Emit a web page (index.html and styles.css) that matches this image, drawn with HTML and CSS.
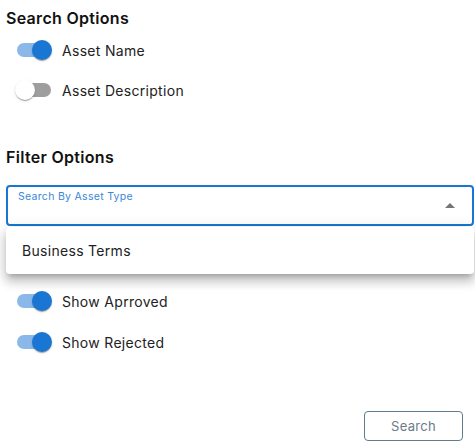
FILE: index.html
```html
<!DOCTYPE html>
<html lang="en">
<head>
    <meta charset="UTF-8">
    <meta name="viewport" content="width=device-width, initial-scale=1.0">
    <title>Search Options</title>
    <link rel="stylesheet" href="styles.css">
</head>
<body>

<div class="panel">
    <h2 class="section-title">Search Options</h2>

    <label class="switch-row">
        <span class="switch on"><span class="track"></span><span class="thumb"></span></span>
        <span class="switch-label">Asset Name</span>
    </label>
    <label class="switch-row">
        <span class="switch"><span class="track"></span><span class="thumb"></span></span>
        <span class="switch-label">Asset Description</span>
    </label>

    <h2 class="section-title filter-title">Filter Options</h2>

    <div class="select-wrap">
        <div class="select-box">
            <span class="select-label">Search By Asset Type</span>
            <span class="arrow"></span>
        </div>
        <!-- menu abierto sobre el contenido -->
        <ul class="menu">
            <li class="menu-item">Business Terms</li>
        </ul>
    </div>

    <div class="filter-switches">
        <label class="switch-row">
            <span class="switch on"><span class="track"></span><span class="thumb"></span></span>
            <span class="switch-label">Show Aprroved</span>
        </label>
        <label class="switch-row">
            <span class="switch on"><span class="track"></span><span class="thumb"></span></span>
            <span class="switch-label">Show Rejected</span>
        </label>
    </div>

    <div class="actions">
        <button class="btn-search">Search</button>
    </div>
</div>

</body>
</html>
```

FILE: styles.css
```css
body {
    font-family: Inter, "Open Sans", sans-serif;
    letter-spacing: 0.3px;
    background-color: #fff;
    color: #1f1f1f;
    margin: 0;
}
.panel {
    padding: 6px 1px 0 6px;
}
.section-title {
    margin: 0;
    font-size: 16px;
    line-height: 24px;
    font-weight: 600;
    color: #111;
}
.filter-title {
    margin-top: 35px;
}
.switch-row {
    display: flex;
    align-items: center;
    gap: 10px;
    height: 40px;
    padding-left: 9px;
}
.switch {
    position: relative;
    width: 37px;
    height: 20px;
}
.track {
    position: absolute;
    left: 2px;
    top: 3px;
    width: 34px;
    height: 14px;
    border-radius: 7px;
    background-color: #9e9e9e;
}
.thumb {
    position: absolute;
    left: 0;
    top: 0;
    width: 20px;
    height: 20px;
    border-radius: 50%;
    background-color: #fff;
    box-shadow: 0 2px 1px -1px rgba(0,0,0,0.2), 0 1px 1px 0 rgba(0,0,0,0.14), 0 1px 3px 0 rgba(0,0,0,0.12);
}
.switch.on .track {
    background-color: #8ab8e9;
}
.switch.on .thumb {
    left: 17px;
    background-color: #1976d2;
}
.switch-label {
    font-size: 14px;
    color: #222;
}
.select-wrap {
    position: relative;
    margin-top: 16px;
}
.select-box {
    position: relative;
    height: 41px;
    border: 2px solid #1976d2;
    border-radius: 4px;
    box-sizing: border-box;
}
.select-label {
    position: absolute;
    left: 10px;
    top: 3px;
    font-size: 10.5px;
    color: #3a87d8;
}
.arrow {
    position: absolute;
    right: 17px;
    top: 16px;
    width: 0;
    height: 0;
    border-left: 5px solid transparent;
    border-right: 5px solid transparent;
    border-bottom: 5px solid #757575;
}
.menu {
    position: absolute;
    left: 0;
    right: 0;
    top: 42px;
    margin: 0;
    padding: 9px 0 8px;
    list-style: none;
    background-color: #fff;
    border-radius: 4px;
    box-shadow: 0 5px 5px -3px rgba(0,0,0,0.2), 0 8px 10px 1px rgba(0,0,0,0.14), 0 3px 14px 2px rgba(0,0,0,0.12);
    z-index: 2;
}
.menu-item {
    padding: 6px 16px;
    font-size: 14px;
    line-height: 18px;
    color: #222;
}
.filter-switches {
    margin-top: 55px;
}
.filter-switches .switch-row + .switch-row {
    margin-top: 1px;
}
.actions {
    display: flex;
    justify-content: flex-end;
    margin-top: 49px;
    padding-right: 11px;
}
.btn-search {
    width: 99px;
    height: 30px;
    font-family: inherit;
    letter-spacing: inherit;
    font-size: 13px;
    color: #6b7a8a;
    background-color: #fff;
    border: 1px solid #5f7d8d;
    border-radius: 4px;
}
```
